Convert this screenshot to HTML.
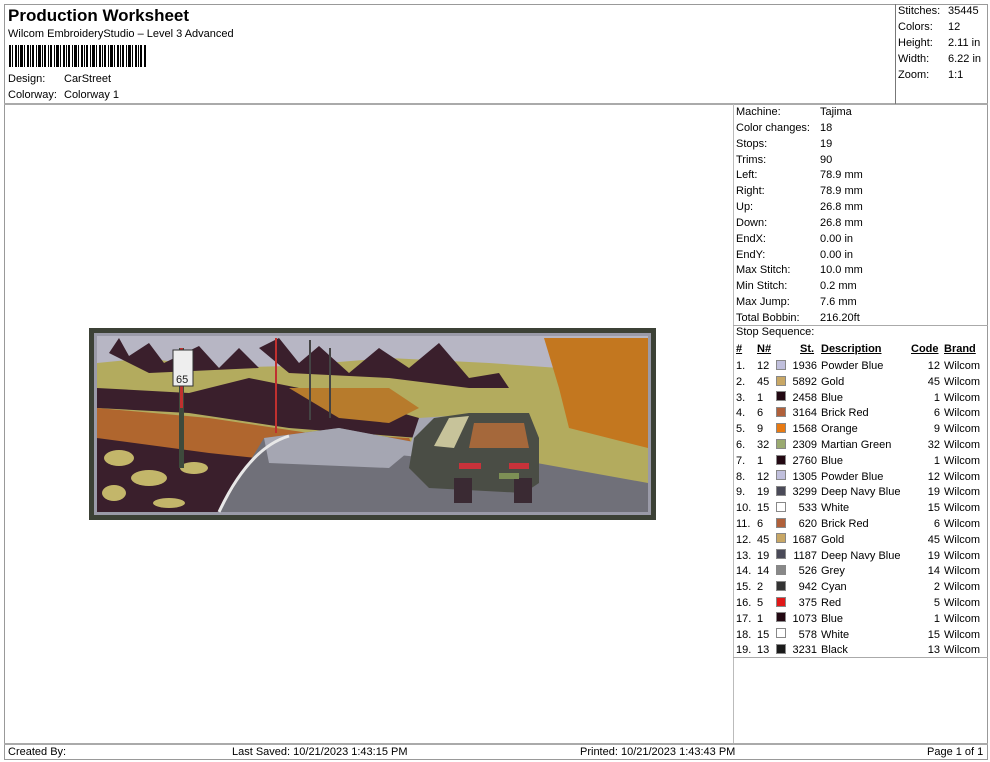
<!DOCTYPE html>
<html><head><meta charset="utf-8"><style>
*{margin:0;padding:0;box-sizing:border-box}
body{width:990px;height:762px;background:#fff;position:relative;overflow:hidden;font-family:"Liberation Sans",Arial,sans-serif;font-size:11px;color:#000}
.a{position:absolute;white-space:nowrap;line-height:13px}
.l{position:absolute;background:#999}
.sw{position:absolute;width:10px;height:10px;border:1px solid #888}
.u{text-decoration:underline;font-weight:bold}
</style></head><body>
<!-- borders -->
<div class="l" style="left:4px;top:4px;width:984px;height:1px"></div>
<div class="l" style="left:4px;top:4px;width:1px;height:756px"></div>
<div class="l" style="left:987px;top:4px;width:1px;height:756px"></div>
<div class="l" style="left:4px;top:103px;width:984px;height:2px;background:#aaa"></div>
<div class="l" style="left:895px;top:4px;width:1px;height:100px;background:#777"></div>
<div class="l" style="left:733px;top:104px;width:1px;height:639px;background:#bbb"></div>
<div class="l" style="left:733px;top:325px;width:255px;height:1px;background:#aaa"></div>
<div class="l" style="left:733px;top:657px;width:255px;height:1px;background:#aaa"></div>
<div class="l" style="left:4px;top:743px;width:984px;height:2px;background:#aaa"></div>
<div class="l" style="left:4px;top:759px;width:984px;height:1px"></div>

<div class="a" style="left:8px;top:6px;font-size:17px;font-weight:bold;line-height:20px">Production Worksheet</div>
<div class="a" style="left:8px;top:28px">Wilcom EmbroideryStudio – Level 3 Advanced</div>
<svg style="position:absolute;left:9px;top:45px" width="138" height="22">
<g fill="#000">
<rect x="0" width="2" height="22"/><rect x="3" width="1" height="22"/><rect x="6" width="2" height="22"/><rect x="9" width="1" height="22"/><rect x="11" width="3" height="22"/><rect x="15" width="1" height="22"/><rect x="18" width="2" height="22"/><rect x="21" width="1" height="22"/><rect x="23" width="2" height="22"/><rect x="27" width="1" height="22"/><rect x="29" width="3" height="22"/><rect x="33" width="1" height="22"/><rect x="35" width="2" height="22"/><rect x="39" width="1" height="22"/><rect x="41" width="2" height="22"/><rect x="45" width="1" height="22"/><rect x="47" width="3" height="22"/><rect x="51" width="1" height="22"/><rect x="54" width="2" height="22"/><rect x="57" width="1" height="22"/><rect x="59" width="2" height="22"/><rect x="63" width="1" height="22"/><rect x="65" width="3" height="22"/><rect x="69" width="1" height="22"/><rect x="72" width="2" height="22"/><rect x="75" width="1" height="22"/><rect x="77" width="2" height="22"/><rect x="81" width="1" height="22"/><rect x="83" width="3" height="22"/><rect x="87" width="1" height="22"/><rect x="90" width="2" height="22"/><rect x="93" width="1" height="22"/><rect x="95" width="2" height="22"/><rect x="99" width="1" height="22"/><rect x="101" width="3" height="22"/><rect x="105" width="1" height="22"/><rect x="108" width="2" height="22"/><rect x="111" width="1" height="22"/><rect x="113" width="2" height="22"/><rect x="117" width="1" height="22"/><rect x="119" width="3" height="22"/><rect x="123" width="1" height="22"/><rect x="126" width="2" height="22"/><rect x="129" width="1" height="22"/><rect x="131" width="2" height="22"/><rect x="135" width="2" height="22"/>
</g></svg>
<div class="a" style="left:8px;top:73px">Design:</div><div class="a" style="left:64px;top:73px">CarStreet</div>
<div class="a" style="left:8px;top:89px">Colorway:</div><div class="a" style="left:64px;top:89px">Colorway 1</div>

<div class="a" style="left:898px;top:5px">Stitches:</div><div class="a" style="left:948px;top:5px">35445</div>
<div class="a" style="left:898px;top:21px">Colors:</div><div class="a" style="left:948px;top:21px">12</div>
<div class="a" style="left:898px;top:37px">Height:</div><div class="a" style="left:948px;top:37px">2.11 in</div>
<div class="a" style="left:898px;top:53px">Width:</div><div class="a" style="left:948px;top:53px">6.22 in</div>
<div class="a" style="left:898px;top:69px">Zoom:</div><div class="a" style="left:948px;top:69px">1:1</div>

<!-- design image -->
<svg style="position:absolute;left:89px;top:328px" width="567" height="192" viewBox="0 0 567 192">
<rect width="567" height="192" fill="#3c4136"/>
<rect x="5" y="5" width="557" height="182" fill="#9a9aa8"/>
<rect x="8" y="8" width="551" height="176" fill="#b7b6c4"/>
<polygon points="8,35 60,30 120,40 200,38 300,30 400,35 470,40 559,30 559,184 8,184" fill="#b3ab5e"/>
<polygon points="20,25 30,10 40,28 60,15 75,35 110,18 130,40 150,20 170,40 60,45" fill="#3a1f2c"/>
<polygon points="170,20 190,10 210,35 230,18 260,45 290,20 320,40 350,15 380,50 410,45 420,60 380,60 300,50 200,45" fill="#3a1f2c"/>
<polygon points="455,10 559,10 559,120 480,100 470,60" fill="#c3771f"/>
<polygon points="8,60 100,65 160,50 260,70 330,90 330,110 200,100 100,85 8,80" fill="#3a1f2c"/>
<polygon points="8,80 120,90 220,105 320,110 330,130 250,140 100,130 8,110" fill="#b0662e"/>
<polygon points="200,60 300,60 330,80 300,95 250,90" fill="#b77b2c"/>
<polygon points="8,110 120,125 260,140 250,184 8,184" fill="#3a1f2c"/>
<g fill="#c3b66a"><ellipse cx="30" cy="130" rx="15" ry="8"/><ellipse cx="60" cy="150" rx="18" ry="8"/><ellipse cx="25" cy="165" rx="12" ry="8"/><ellipse cx="105" cy="140" rx="14" ry="6"/><ellipse cx="80" cy="175" rx="16" ry="5"/></g>
<polygon points="130,184 175,110 250,100 330,115 420,130 559,155 559,184" fill="#707079"/>
<polygon points="175,110 250,100 330,115 300,140 180,135" fill="#a5a6b2"/>
<polygon points="290,125 320,120 330,90 360,88 340,130" fill="#a5a6b2"/>
<path d="M130 184 Q160 120 200 108" stroke="#e8e8e8" stroke-width="3" fill="none"/>
<rect x="90" y="20" width="5" height="120" fill="#3e4a3c"/><rect x="91" y="20" width="3" height="60" fill="#c0302f"/>
<rect x="84" y="22" width="20" height="36" fill="#eee" stroke="#333"/>
<text x="87" y="55" font-size="11" font-family="Liberation Sans" fill="#222">65</text>
<rect x="186" y="10" width="2" height="95" fill="#c0302f"/>
<rect x="220" y="12" width="2" height="80" fill="#444"/>
<rect x="240" y="20" width="2" height="70" fill="#444"/>
<polygon points="345,90 380,85 440,85 450,110 450,155 435,165 340,160 320,140 325,110" fill="#4a4d45"/>
<polygon points="360,90 380,88 365,120 345,118" fill="#c7c39a"/>
<polygon points="385,95 435,95 440,120 380,120" fill="#a5683b"/>
<rect x="370" y="135" width="22" height="6" fill="#c8323a"/><rect x="420" y="135" width="20" height="6" fill="#c8323a"/>
<rect x="365" y="150" width="18" height="25" fill="#3a2a33"/><rect x="425" y="150" width="18" height="25" fill="#3a2a33"/>
<rect x="410" y="145" width="20" height="6" fill="#7d8f55"/>
</svg>

<!-- right panel info -->
<div class="a" style="left:736px;top:105px;line-height:15.85px">Machine:<br>Color changes:<br>Stops:<br>Trims:<br>Left:<br>Right:<br>Up:<br>Down:<br>EndX:<br>EndY:<br>Max Stitch:<br>Min Stitch:<br>Max Jump:<br>Total Bobbin:</div>
<div class="a" style="left:820px;top:105px;line-height:15.85px">Tajima<br>18<br>19<br>90<br>78.9 mm<br>78.9 mm<br>26.8 mm<br>26.8 mm<br>0.00 in<br>0.00 in<br>10.0 mm<br>0.2 mm<br>7.6 mm<br>216.20ft</div>
<div class="a" style="left:736px;top:326px">Stop Sequence:</div>

<div class="a u" style="left:736px;top:343px">#</div>
<div class="a u" style="left:757px;top:343px">N#</div>
<div class="a u" style="left:800px;top:343px">St.</div>
<div class="a u" style="left:821px;top:343px">Description</div>
<div class="a u" style="left:911px;top:343px">Code</div>
<div class="a u" style="left:944px;top:343px">Brand</div>

<div class="a" style="left:736px;top:359px;line-height:15.8px">1.<br>2.<br>3.<br>4.<br>5.<br>6.<br>7.<br>8.<br>9.<br>10.<br>11.<br>12.<br>13.<br>14.<br>15.<br>16.<br>17.<br>18.<br>19.</div>
<div class="a" style="left:757px;top:359px;line-height:15.8px">12<br>45<br>1<br>6<br>9<br>32<br>1<br>12<br>19<br>15<br>6<br>45<br>19<br>14<br>2<br>5<br>1<br>15<br>13</div>
<div class="a" style="left:790px;width:27px;text-align:right;top:359px;line-height:15.8px">1936<br>5892<br>2458<br>3164<br>1568<br>2309<br>2760<br>1305<br>3299<br>533<br>620<br>1687<br>1187<br>526<br>942<br>375<br>1073<br>578<br>3231</div>
<div class="a" style="left:821px;top:359px;line-height:15.8px">Powder Blue<br>Gold<br>Blue<br>Brick Red<br>Orange<br>Martian Green<br>Blue<br>Powder Blue<br>Deep Navy Blue<br>White<br>Brick Red<br>Gold<br>Deep Navy Blue<br>Grey<br>Cyan<br>Red<br>Blue<br>White<br>Black</div>
<div class="a" style="left:915px;width:25px;text-align:right;top:359px;line-height:15.8px">12<br>45<br>1<br>6<br>9<br>32<br>1<br>12<br>19<br>15<br>6<br>45<br>19<br>14<br>2<br>5<br>1<br>15<br>13</div>
<div class="a" style="left:944px;top:359px;line-height:15.8px">Wilcom<br>Wilcom<br>Wilcom<br>Wilcom<br>Wilcom<br>Wilcom<br>Wilcom<br>Wilcom<br>Wilcom<br>Wilcom<br>Wilcom<br>Wilcom<br>Wilcom<br>Wilcom<br>Wilcom<br>Wilcom<br>Wilcom<br>Wilcom<br>Wilcom</div>

<div class="sw" style="left:776px;top:360px;background:#c0bfdc"></div>
<div class="sw" style="left:776px;top:376px;background:#c8a765"></div>
<div class="sw" style="left:776px;top:391px;background:#220812"></div>
<div class="sw" style="left:776px;top:407px;background:#b0603a"></div>
<div class="sw" style="left:776px;top:423px;background:#e87a12"></div>
<div class="sw" style="left:776px;top:439px;background:#9aaa70"></div>
<div class="sw" style="left:776px;top:455px;background:#220812"></div>
<div class="sw" style="left:776px;top:470px;background:#c0bfdc"></div>
<div class="sw" style="left:776px;top:486px;background:#4a4a58"></div>
<div class="sw" style="left:776px;top:502px;background:#fff"></div>
<div class="sw" style="left:776px;top:518px;background:#b0603a"></div>
<div class="sw" style="left:776px;top:533px;background:#c8a765"></div>
<div class="sw" style="left:776px;top:549px;background:#4a4a58"></div>
<div class="sw" style="left:776px;top:565px;background:#888"></div>
<div class="sw" style="left:776px;top:581px;background:#333"></div>
<div class="sw" style="left:776px;top:597px;background:#e01818"></div>
<div class="sw" style="left:776px;top:612px;background:#220812"></div>
<div class="sw" style="left:776px;top:628px;background:#fff"></div>
<div class="sw" style="left:776px;top:644px;background:#1a1a1a"></div>

<!-- footer -->
<div class="a" style="left:8px;top:746px">Created By:</div>
<div class="a" style="left:232px;top:746px">Last Saved: 10/21/2023 1:43:15 PM</div>
<div class="a" style="left:580px;top:746px">Printed: 10/21/2023 1:43:43 PM</div>
<div class="a" style="left:927px;top:746px">Page 1 of 1</div>
</body></html>
